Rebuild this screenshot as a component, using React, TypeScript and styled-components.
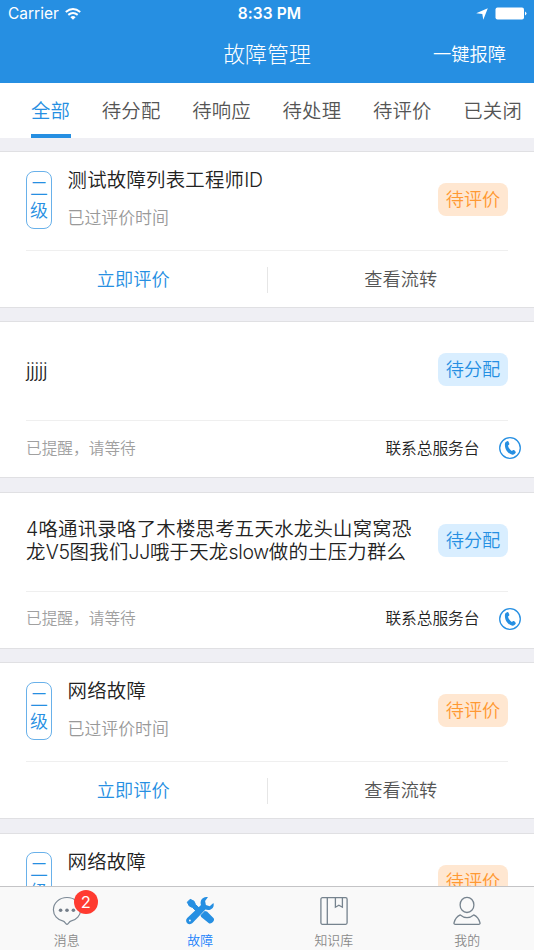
import React from 'react';
import styled, { createGlobalStyle, css } from 'styled-components';

const BLUE = '#268fe2';

const GlobalStyle = createGlobalStyle`
  * { box-sizing: border-box; }
  body {
    margin: 0;
    font-family: Inter, "Noto Sans CJK SC", sans-serif;
    font-weight: 350;
    color: #222;
    background: #efeff4;
  }
  button { font: inherit; border: 0; padding: 0; background: none; color: inherit; }
  svg { display: block; flex: none; }
`;

const Screen = styled.div`
  display: flex;
  flex-direction: column;
  width: 534px;
  height: 950px;
  overflow: hidden;
`;

const Header = styled.header`
  flex: none;
  height: 83px;
  background: ${BLUE};
  color: #fff;
`;

const StatusBar = styled.div`
  display: grid;
  grid-template-columns: 1fr auto 1fr;
  align-items: center;
  height: 27px;
  padding: 0 7px 0 8px;
  font-size: 15.5px;
  line-height: 27px;
`;

const Carrier = styled.div`
  display: flex;
  align-items: center;
  gap: 6px;
  font-weight: 400;
`;

const Clock = styled.div`
  font-weight: 600;
  letter-spacing: 0.1px;
  padding-left: 4px;
`;

const StatusIcons = styled.div`
  display: flex;
  align-items: center;
  justify-content: flex-end;
  gap: 7px;
`;

const NavBar = styled.div`
  display: grid;
  grid-template-columns: 1fr auto 1fr;
  align-items: center;
  height: 54px;
  padding: 0 28px;
  line-height: 54px;
`;

const NavTitle = styled.h1`
  grid-column: 2;
  margin: 0;
  font-size: 21.9px;
  font-weight: 300;
`;

const NavAction = styled.button`
  justify-self: end;
  font-size: 18.3px;
`;

const Tabs = styled.nav`
  display: flex;
  flex: none;
  gap: 31.6px;
  height: 55px;
  padding-left: 31px;
  background: #fff;
  overflow: hidden;
`;

const Tab = styled.button<{ $active?: boolean }>`
  flex: none;
  height: 55px;
  padding-top: 1px;
  font-size: 19.4px;
  letter-spacing: 0.2px;
  color: #555;
  white-space: nowrap;
  border-bottom: 4px solid transparent;
  ${(p) => p.$active && css`
    padding-right: 0.8px;
    margin-right: -0.8px;
    color: ${BLUE};
    border-color: ${BLUE};
  `}
`;

const List = styled.main`
  flex: 1;
  min-height: 0;
  display: flex;
  flex-direction: column;
  gap: 13.4px;
  padding-top: 13px;
  overflow: hidden;
`;

const Card = styled.article`
  flex: none;
  height: 157px;
  background: #fff;
  border: solid #e0e0e3;
  border-width: 1px 0;
`;

const CardBody = styled.div`
  display: flex;
  align-items: center;
  height: 99px;
  margin: 0 26px;
  padding-bottom: 3px;
  border-bottom: 1px solid #efefef;
`;

const Level = styled.div`
  display: flex;
  flex: none;
  flex-direction: column;
  align-items: center;
  justify-content: center;
  width: 26px;
  height: 58px;
  margin-right: 15.5px;
  border: 1px solid #69b1ea;
  border-radius: 8px;
  color: ${BLUE};
  font-size: 18px;
  line-height: 22px;
`;

const Info = styled.div<{ $single?: boolean }>`
  flex: 1;
  min-width: 0;
  padding: ${(p) => (p.$single ? '1px 20px 0 0' : '0 20px 0 0')};
`;

const Title = styled.h2`
  margin: 0;
  font-size: 19.4px;
  font-weight: 350;
  line-height: 23px;
  letter-spacing: 0.25px;
`;

const Latin = styled.span`
  letter-spacing: -0.3px;
`;

const Subtitle = styled.p`
  margin: 14px 0 0;
  font-size: 16.9px;
  line-height: 24px;
  color: #999;
`;

const Tag = styled.span<{ $tone: 'orange' | 'blue' }>`
  flex: none;
  width: 70px;
  height: 33px;
  border-radius: 8px;
  font-size: 18.2px;
  line-height: 33px;
  text-align: center;
  color: ${(p) => (p.$tone === 'orange' ? '#ff9933' : BLUE)};
  background: ${(p) => (p.$tone === 'orange' ? '#ffe7d1' : '#d9eeff')};
`;

const Actions = styled.div`
  display: grid;
  grid-template-columns: 1fr 1px 1fr;
  align-items: center;
  height: 57px;
`;

const Action = styled.button<{ $primary?: boolean }>`
  padding-bottom: 3px;
  font-size: 18.2px;
  color: ${(p) => (p.$primary ? BLUE : '#555')};
`;

const Separator = styled.div`
  height: 26px;
  background: #e6e6e6;
`;

const Support = styled.div`
  display: flex;
  align-items: center;
  height: 56px;
  padding: 0 13px 2px 26px;
  font-size: 15.7px;
`;

const SupportLabel = styled.span<{ $muted?: boolean }>`
  padding-bottom: 2px;
  ${(p) => p.$muted && css`flex: 1; color: #a0a0a0;`}
`;

const Contact = styled.button`
  display: flex;
  align-items: center;
  gap: 19.5px;
`;

const TabBar = styled.footer`
  display: grid;
  grid-template-columns: repeat(4, 1fr);
  flex: none;
  height: 64px;
  background: #f9f9f9;
  border-top: 1px solid #c4c4c6;
`;

const BarItem = styled.button<{ $active?: boolean }>`
  display: flex;
  flex-direction: column;
  align-items: center;
  gap: 6px;
  padding-top: 9px;
  font-size: 12.9px;
  line-height: 18px;
  color: ${(p) => (p.$active ? '#1a82fb' : '#8a8a8a')};
`;

const IconBox = styled.span`
  position: relative;
  display: block;
  height: 30px;
`;

const Badge = styled.span`
  position: absolute;
  top: -6px;
  left: 22px;
  width: 24px;
  height: 24px;
  border-radius: 50%;
  background: #ff3b30;
  color: #fff;
  font-size: 16.5px;
  font-weight: 400;
  line-height: 24px;
  text-align: center;
`;

const WifiIcon = () => (
  <svg width="16" height="12" viewBox="0 0 16 12" fill="none" stroke="#fff" strokeWidth="2">
    <path d="M.8 4.1Q8-2 15.2 4.1" />
    <path d="M3.3 6.9Q8 3.1 12.7 6.9" />
    <path d="M5.4 9.2Q8 7 10.6 9.2L8 11.8Z" fill="#fff" stroke="none" />
  </svg>
);

const LocationIcon = () => (
  <svg width="12" height="12" viewBox="0 0 12 12" fill="#fff">
    <path d="M11.8.2 7.3 11.7 6.3 6.1.2 5.3Z" />
  </svg>
);

const BatteryIcon = () => (
  <svg width="32" height="13" viewBox="0 0 32 13" fill="#fff">
    <rect x=".5" y=".5" width="28.5" height="12" rx="2" />
    <path d="M30 4.5q3 2 0 4Z" />
  </svg>
);

const PhoneIcon = () => (
  <svg width="22" height="22" viewBox="0 0 22 22">
    <circle cx="11" cy="11" r="10.3" fill="none" stroke={BLUE} strokeWidth="1.3" />
    <path
      d="M6.7 5 8.5 4c.9-.3 2 2.6 1.8 3.2-.2.7-1.3.9-1.2 1.6.3 2 1.8 3.900 3.400 5 .7.4 1.300-.8 2-.7.8 0 2.700 1.900 2.300 2.500-.6 1.300-2 2.300-3.400 2.100C9.200 17 5.900 12.300 5.900 7.900c0-1.200.1-2.300.8-2.900Z"
      fill={BLUE}
    />
  </svg>
);

const MessageIcon = () => (
  <svg width="30" height="30" viewBox="0 0 30 30">
    <path
      d="M15 1.5C7.3 1.5 1.4 7 1.4 13.7c0 5.7 4.2 10.3 9.8 11.5 1.700.4 2.300 2.800 3.800 3.200 1.500-.4 2.100-2.800 3.800-3.200 5.600-1.200 9.800-5.800 9.800-11.500C28.600 7 22.700 1.500 15 1.500Z"
      fill="none" stroke="#7c8995" strokeWidth="1.2"
    />
    <g fill="#747e89">
      <circle cx="8.6" cy="14.2" r="1.8" />
      <circle cx="15" cy="14.2" r="1.8" />
      <circle cx="21.4" cy="14.2" r="1.8" />
    </g>
  </svg>
);

const ToolsIcon = () => (
  <svg width="28" height="30" viewBox="0 0 28 30" fill={BLUE}>
    <path d="M4.2 3.3 8 5.2 9.5 8.5 15 13.800l-3 3L6.500 11.500 3.300 10 1.300 6.200Z" strokeLinejoin="round" stroke={BLUE} strokeWidth="1" />
    <path d="m14.500 19.300 4.200-4.200 2.300.4 6.400 6.400c1.100 1.100.8 2.700-.5 4.200s-3.200 1.900-4.300.8L15.200 20.900Z" />
    <path d="M22 1.100c-2.800-.8-5.900.6-7 3.300-.6 1.600-.5 3.200 0 4.700L1.200 21.900c-1.500 1.500-1.400 3.900 0 5.300 1.500 1.500 3.900 1.300 5.300-.1L19.400 13.600c3 1 5.700.3 7.300-1.600 1.100-1.400 1.300-3.200.7-5l-3.700 3.200-3.800-1.300-.8-3.900Z" />
    <circle cx="3.9" cy="24.5" r=".9" fill="#f9f9f9" />
  </svg>
);

const BookIcon = () => (
  <svg width="28" height="30" viewBox="0 0 28 30" fill="none" stroke="#76838e" strokeWidth="1.3">
    <rect x=".9" y="1.7" width="26.2" height="26.6" rx="1.5" />
    <path d="M7.3 1.700v26.600M15.400 1.700v9.500l3.500-2 3.500 2V1.700" />
  </svg>
);

const PersonIcon = () => (
  <svg width="28" height="30" viewBox="0 0 28 30" fill="none" stroke="#76838e" strokeWidth="1.3" strokeLinejoin="round">
    <ellipse cx="14" cy="8.9" rx="6.9" ry="7.6" />
    <path d="M7.300 18.900c4.300 3.500 9.100 3.500 13.400 0 3.400 1.500 5.300 4.200 6.300 7.900.2.9-.4 1.600-1.300 1.600H2.300c-.9 0-1.500-.7-1.300-1.600 1-3.700 2.900-6.400 6.300-7.900Z" />
  </svg>
);

type Ticket = { kind: 'review' | 'assign'; title: string };

const tickets: Ticket[] = [
  { kind: 'review', title: '测试故障列表工程师ID' },
  { kind: 'assign', title: 'jjjjj' },
  { kind: 'assign', title: '4咯通讯录咯了木楼思考五天水龙头山窝窝恐龙V5图我们JJ哦于天龙slow做的土压力群么' },
  { kind: 'review', title: '网络故障' },
  { kind: 'review', title: '网络故障' },
];

// Latin runs are set slightly tighter than the Chinese text around them.
const TitleText = ({ text }: { text: string }) => (
  <Title>
    {text.split(/([A-Za-z][A-Za-z0-9]*)/).map((part, i) =>
      i % 2 ? <Latin key={i}>{part}</Latin> : part
    )}
  </Title>
);

const ReviewCard = ({ title }: { title: string }) => (
  <Card>
    <CardBody>
      <Level><span>二</span><span>级</span></Level>
      <Info>
        <TitleText text={title} />
        <Subtitle>已过评价时间</Subtitle>
      </Info>
      <Tag $tone="orange">待评价</Tag>
    </CardBody>
    <Actions>
      <Action $primary>立即评价</Action>
      <Separator />
      <Action>查看流转</Action>
    </Actions>
  </Card>
);

const AssignCard = ({ title }: { title: string }) => (
  <Card>
    <CardBody>
      <Info $single><TitleText text={title} /></Info>
      <Tag $tone="blue">待分配</Tag>
    </CardBody>
    <Support>
      <SupportLabel $muted>已提醒，请等待</SupportLabel>
      <Contact><SupportLabel>联系总服务台</SupportLabel><PhoneIcon /></Contact>
    </Support>
  </Card>
);

const tabs = ['全部', '待分配', '待响应', '待处理', '待评价', '已关闭'];

export default function App() {
  return (
    <Screen lang="zh-CN">
      <GlobalStyle />
      <Header>
        <StatusBar>
          <Carrier>Carrier<WifiIcon /></Carrier>
          <Clock>8:33 PM</Clock>
          <StatusIcons><LocationIcon /><BatteryIcon /></StatusIcons>
        </StatusBar>
        <NavBar>
          <NavTitle>故障管理</NavTitle>
          <NavAction>一键报障</NavAction>
        </NavBar>
      </Header>
      <Tabs>
        {tabs.map((label, i) => <Tab key={label} $active={i === 0}>{label}</Tab>)}
      </Tabs>
      <List>
        {tickets.map((t, i) =>
          t.kind === 'review' ? <ReviewCard key={i} title={t.title} /> : <AssignCard key={i} title={t.title} />
        )}
      </List>
      <TabBar>
        <BarItem><IconBox><MessageIcon /><Badge>2</Badge></IconBox>消息</BarItem>
        <BarItem $active><IconBox><ToolsIcon /></IconBox>故障</BarItem>
        <BarItem><IconBox><BookIcon /></IconBox>知识库</BarItem>
        <BarItem><IconBox><PersonIcon /></IconBox>我的</BarItem>
      </TabBar>
    </Screen>
  );
}
